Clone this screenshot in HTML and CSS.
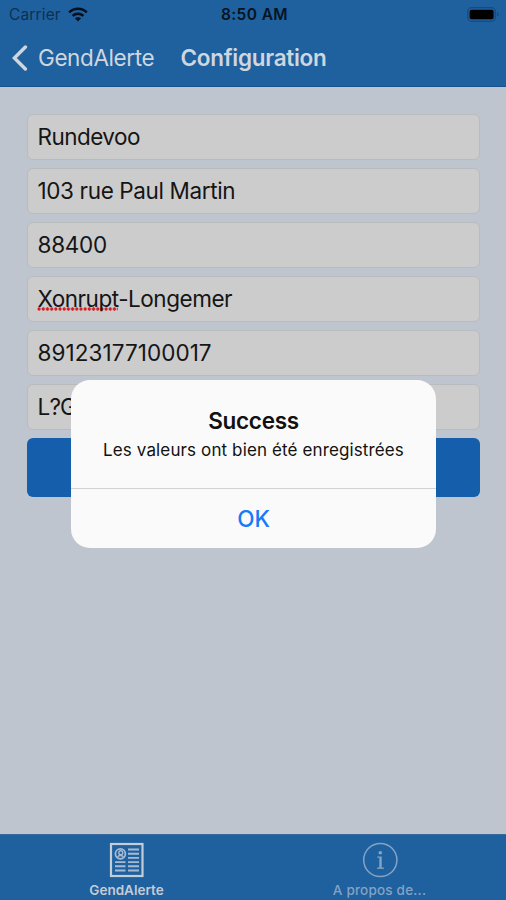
FILE: index.html
```html
<!DOCTYPE html>
<html lang="fr">
<head>
<meta charset="utf-8">
<meta name="viewport" content="width=device-width, initial-scale=1">
<title>Configuration</title>
<link rel="stylesheet" href="styles.css">
</head>
<body>
<div class="screen">
  <header class="header">
    <div class="status">
      <div class="carrier"><span>Carrier</span>
        <svg class="wifi" width="20" height="15" viewBox="0 0 20 15" fill="none" stroke="currentColor" stroke-width="2.6">
          <path d="M1.2 5.4C6.2.6 13.8.6 18.8 5.4"/><path d="M4.6 8.9c3.1-2.8 7.7-2.8 10.8 0"/><path d="M6.9 11.3c1.8-1.5 4.4-1.5 6.2 0L10 14.4z" fill="currentColor" stroke="none"/>
        </svg>
      </div>
      <span class="time">8:50 AM</span>
      <svg class="battery" width="33" height="15" viewBox="0 0 33 15">
        <rect x=".7" y=".7" width="27.6" height="13.6" rx="4" fill="none" stroke="#174b80" stroke-width="1.3"/>
        <rect x="2.6" y="2.8" width="24" height="9.4" rx="2" fill="#000"/>
        <path d="M30.2 5.3c2 .7 2 3.7 0 4.4z" fill="#174b80"/>
      </svg>
    </div>
    <nav class="nav">
      <a class="back">
        <svg width="16" height="26" viewBox="0 0 16 26" fill="none" stroke="currentColor" stroke-width="3.4" stroke-linecap="round"><path d="M13.4 2L2.4 13l11 11"/></svg>
        <span>GendAlerte</span>
      </a>
      <h1 class="title">Configuration</h1>
    </nav>
  </header>
  <main class="form">
    <div class="field"><span class="name">Rundevoo</span></div>
    <div class="field"><span>103 rue Paul Martin</span></div>
    <div class="field"><span class="postcode">88400</span></div>
    <div class="field"><span class="city"><span class="misspelled">Xonrupt</span>-Longemer</span></div>
    <div class="field"><span class="number">89123177100017</span></div>
    <div class="field"><span class="code">L?G</span></div>
    <div class="submit"></div>
  </main>
  <footer class="tabs">
    <div class="tab active">
      <svg width="36" height="36" viewBox="0 0 36 36" fill="none" stroke="currentColor">
        <rect x="2" y="2" width="31.5" height="32" stroke-width="2.2"/>
        <g stroke="#a6bbd3">
          <circle cx="11.4" cy="11.8" r="5" stroke-width="1.8"/><circle cx="11.8" cy="10.8" r="2" stroke-width="1.4"/><path d="M8.5 15.5c1-2.7 5-2.4 6-.2" stroke-width="1.4"/>
          <path d="M19 7.5h11M19 11.7h11M19 15.9h11M19 20.1h11M19 24.3h11M19 28.5h11M6 20.1h10.5M6 24.3h10.5M6 28.5h10.5" stroke-width="1.9"/>
        </g>
      </svg>
      <span>GendAlerte</span>
    </div>
    <div class="tab">
      <svg width="36" height="36" viewBox="0 0 36 36" fill="none" stroke="currentColor">
        <circle cx="18.3" cy="18" r="16.6" stroke-width="1.5"/>
        <circle cx="18.3" cy="10.7" r="1.8" fill="currentColor" stroke="none"/>
        <path d="M15.3 15.1h2" stroke-width="1.3"/><path d="M18.5 14.5V26" stroke-width="2.4"/><path d="M15.1 26.2h6.8" stroke-width="1.3"/>
      </svg>
      <span class="about">A propos de...</span>
    </div>
  </footer>
  <section class="alert" role="alertdialog">
    <div class="message">
      <h2>Success</h2>
      <p>Les valeurs ont bien été enregistrées</p>
    </div>
    <div class="ok"><span>OK</span></div>
  </section>
</div>
</body>
</html>
```
FILE: styles.css
```css
* { box-sizing: border-box; }
body { margin: 0; font-family: Inter, "Liberation Sans", sans-serif; }
h1, h2, p { margin: 0; }
svg { display: block; flex: none; }
span, h1, h2, p { white-space: nowrap; }
.screen { position: relative; width: 506px; height: 900px; display: flex; flex-direction: column; background: #bfc5ce; overflow: hidden; }

.header { height: 87px; background: #1f609f; border-bottom: 1px solid #19528b; }
.status { display: grid; grid-template-columns: 1fr auto 1fr; align-items: center; height: 28px; padding: 0 6px 0 9px; color: #0b1a29; }
.carrier { display: flex; align-items: center; gap: 7px; font-size: 15.5px; letter-spacing: .15px; color: #10304f; }
.wifi { color: #04101c; }
.time { font-size: 15.5px; font-weight: 600; letter-spacing: .4px; color: #061422; }
.battery { justify-self: end; }
.nav { display: flex; align-items: center; height: 59px; padding-left: 12px; color: #d0d6de; }
.back { display: flex; align-items: center; gap: 10px; width: 168.5px; font-size: 22.5px; letter-spacing: -.4px; }
.title { font-size: 22.5px; font-weight: 600; letter-spacing: -.28px; }

.form { flex: 1; display: flex; flex-direction: column; gap: 8px; padding: 26.5px 26px 0 27px; }
.field { display: flex; align-items: center; height: 46px; padding-left: 9.5px; border: 1px solid #b9bcbf; border-radius: 6px; background: #cccccc; color: #151515; font-size: 22.5px; letter-spacing: -.37px; }
.name { letter-spacing: -.55px; }
.postcode { letter-spacing: -.25px; }
.city { letter-spacing: -.47px; }
.number { letter-spacing: .06px; }
.code { letter-spacing: -.8px; }
.misspelled { margin-left: -1px; padding-left: 1px; background: radial-gradient(circle, #d31f25 1.4px, transparent 1.9px) 0 calc(100% - 1.5px) / 4.2px 4px repeat-x; }
.submit { height: 59px; border-radius: 6px; background: #145eac; }

.tabs { display: flex; height: 66px; border-top: 1px solid #39699b; background: #1f609f; }
.tab { flex: 1; display: flex; flex-direction: column; align-items: center; gap: 4px; padding-top: 7px; font: 600 13.5px/16px Inter, sans-serif; color: #83a4c5; }
.tab.active { color: #c4ccd6; }
.about { font-weight: 500; letter-spacing: .2px; }

.alert { position: absolute; left: 71px; top: 380px; width: 365px; height: 168px; border-radius: 19px; background: #fafafa; overflow: hidden; text-align: center; color: #111; }
.message { height: 109px; padding-top: 27px; border-bottom: 1px solid #d2d3d4; }
.message h2 { font-size: 22.5px; line-height: 28px; font-weight: 600; letter-spacing: -.3px; }
.message p { font-size: 17px; line-height: 22px; margin-top: 4px; letter-spacing: .12px; }
.ok { display: flex; align-items: center; justify-content: center; height: 59px; color: #157bf8; font-size: 22.5px; font-weight: 500; letter-spacing: -.2px; }
```
